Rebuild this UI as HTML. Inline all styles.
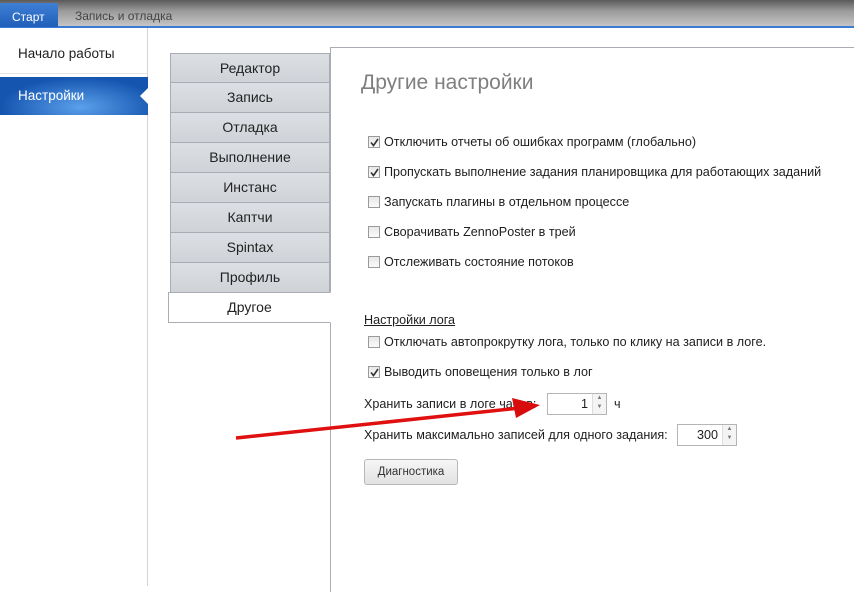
<!DOCTYPE html>
<html><head><meta charset="utf-8"><style>
*{margin:0;padding:0;box-sizing:border-box}
body{width:854px;height:586px;overflow:hidden;background:#fff;font-family:"Liberation Sans",sans-serif;position:relative;color:#1e1e1e}
.top{position:absolute;left:0;top:0;width:854px;height:27px;background:linear-gradient(#5a5a5a,#9a9a9a 40%,#c8c8c8)}
.blue{position:absolute;left:0;top:26px;width:854px;height:2px;background:#3a7bd5}
.start{position:absolute;left:0;top:3px;width:58px;height:24px;background:linear-gradient(#3f7fd6,#1f5fb8);color:#fff;font-size:12px;padding:7px 0 0 12px;border-radius:2px 2px 0 0}
.rec{position:absolute;left:75px;top:9px;font-size:12px;color:#444}
.side{position:absolute;left:0;top:28px;width:148px;height:558px;background:#fff;border-right:1px solid #d4d4d4}
.s1{position:absolute;left:18px;top:46px;font-size:13.5px}
.sep{position:absolute;left:0;top:73px;width:147px;height:1px;background:#e6e6e6}
.sel{position:absolute;left:0;top:77px;width:148px;height:38px;background:radial-gradient(ellipse at 80px 30px,#5aa0ea,#1555b0 70%);color:#fff;font-size:13.5px;padding:11px 0 0 18px}
.tri{position:absolute;left:140px;top:88px;width:0;height:0;border-top:8px solid transparent;border-bottom:8px solid transparent;border-right:8px solid #fff}
.tab{position:absolute;left:170px;width:160px;height:30px;background:linear-gradient(#dcdfe3,#cfd3d8);border:1px solid #a9adb3;border-top:none;text-align:center;font-size:14px;line-height:29px;color:#222}
.panel{position:absolute;left:330px;top:47px;width:530px;height:545px;border-left:1px solid #a9adb3;border-top:1px solid #a9adb3}
h1{position:absolute;left:361px;top:71px;font-size:21px;font-weight:normal;color:#7f7f7f}
.cb{position:absolute;left:368px;font-size:12.6px;white-space:nowrap}
.cb i{position:absolute;left:0;top:1px;width:12px;height:12px;border:1px solid #9a9a9a;background:linear-gradient(#e8e8e8,#fafafa)}
.cb i svg{position:absolute;left:1px;top:1px}
.cb span{position:absolute;left:16px;top:0}
.t{position:absolute;font-size:12.6px;white-space:nowrap}
.num{position:absolute;height:22px;border:1px solid #b5b5b5;background:#fff;font-size:12.6px;text-align:right;padding:3px 18px 0 0}
.num b{position:absolute;right:0;top:0;width:14px;height:20px;border-left:1px solid #ddd;background:#f4f4f4;font-size:6px;color:#777;text-align:center;line-height:9px;font-weight:normal}
.btn{position:absolute;left:364px;top:459px;width:94px;height:26px;border:1px solid #b8b8b8;border-radius:3px;background:linear-gradient(#f6f6f6,#e2e2e2);font-size:11.5px;text-align:center;line-height:24px;color:#333}
</style></head><body>
<div class="top"></div><div class="blue"></div>
<div class="start">Старт</div><div class="rec">Запись и отладка</div>
<div class="side"><div class="s1" style="top:18px">Начало работы</div><div class="sep" style="top:45px"></div></div>
<div class="sel">Настройки</div><div class="tri"></div>
<div class="panel"></div>
<div class="tab" style="top:53px;border-top:1px solid #a9adb3">Редактор</div>
<div class="tab" style="top:83px">Запись</div>
<div class="tab" style="top:113px">Отладка</div>
<div class="tab" style="top:143px">Выполнение</div>
<div class="tab" style="top:173px">Инстанс</div>
<div class="tab" style="top:203px">Каптчи</div>
<div class="tab" style="top:233px">Spintax</div>
<div class="tab" style="top:263px">Профиль</div>
<div class="tab" style="top:292px;left:168px;width:163px;height:31px;background:#fff;border:1px solid #a9adb3;border-right:1px solid #fff">Другое</div>
<h1>Другие настройки</h1>
<div class="cb" style="top:135px"><i><svg width="9" height="9"><path d="M1 4.5 L3.5 7.5 L8 1" stroke="#333" stroke-width="1.6" fill="none"/></svg></i><span>Отключить отчеты об ошибках программ (глобально)</span></div>
<div class="cb" style="top:165px"><i><svg width="9" height="9"><path d="M1 4.5 L3.5 7.5 L8 1" stroke="#333" stroke-width="1.6" fill="none"/></svg></i><span>Пропускать выполнение задания планировщика для работающих заданий</span></div>
<div class="cb" style="top:195px"><i></i><span>Запускать плагины в отдельном процессе</span></div>
<div class="cb" style="top:225px"><i></i><span>Сворачивать ZennoPoster в трей</span></div>
<div class="cb" style="top:255px"><i></i><span>Отслеживать состояние потоков</span></div>
<div class="t" style="left:364px;top:313px;text-decoration:underline">Настройки лога</div>
<div class="cb" style="top:335px"><i></i><span>Отключать автопрокрутку лога, только по клику на записи в логе.</span></div>
<div class="cb" style="top:365px"><i><svg width="9" height="9"><path d="M1 4.5 L3.5 7.5 L8 1" stroke="#333" stroke-width="1.6" fill="none"/></svg></i><span>Выводить оповещения только в лог</span></div>
<div class="t" style="left:364px;top:397px">Хранить записи в логе часов:</div>
<div class="num" style="left:547px;top:393px;width:60px">1<b>▲<br>▼</b></div>
<div class="t" style="left:614px;top:397px">ч</div>
<div class="t" style="left:364px;top:428px">Хранить максимально записей для одного задания:</div>
<div class="num" style="left:677px;top:424px;width:60px">300<b>▲<br>▼</b></div>
<div class="btn">Диагностика</div>
<svg style="position:absolute;left:0;top:0" width="854" height="586"><line x1="236" y1="438" x2="520" y2="408" stroke="#e01010" stroke-width="3.5"/><polygon points="540,405 512,398 516,418" fill="#d80c0c"/></svg>
</body></html>
